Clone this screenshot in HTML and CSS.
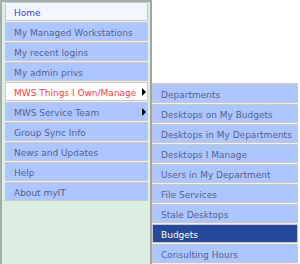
FILE: index.html
```html
<!DOCTYPE html>
<html>
<head>
<meta charset="utf-8">
<link rel="stylesheet" href="styles.css">
</head>
<body>
<div class="page">
  <div class="nav">
    <ul class="menu">
      <li class="item home">Home</li>
      <li class="item">My Managed Workstations</li>
      <li class="item">My recent logins</li>
      <li class="item">My admin privs</li>
      <li class="item active"><span>MWS Things I Own/Manage</span><i class="arrow"></i></li>
      <li class="item"><span>MWS Service Team</span><i class="arrow"></i></li>
      <li class="item">Group Sync Info</li>
      <li class="item">News and Updates</li>
      <li class="item">Help</li>
      <li class="item">About myIT</li>
    </ul>
  </div>
  <ul class="submenu">
    <li class="item">Departments</li>
    <li class="item">Desktops on My Budgets</li>
    <li class="item">Desktops in My Departments</li>
    <li class="item">Desktops I Manage</li>
    <li class="item">Users in My Department</li>
    <li class="item">File Services</li>
    <li class="item">Stale Desktops</li>
    <li class="item selected">Budgets</li>
    <li class="item">Consulting Hours</li>
  </ul>
</div>
</body>
</html>
```
FILE: styles.css
```css
html, body {
  margin: 0;
  padding: 0;
  background: #ffffff;
}
body {
  font-family: "DejaVu Sans", Verdana, sans-serif;
  font-size: 9px;
}
.page {
  position: relative;
  width: 300px;
  height: 264px;
  overflow: hidden;
}
.nav {
  box-sizing: border-box;
  width: 152px;
  height: 264px;
  border-left: 2px solid #a4acac;
  border-top: 2px solid #a4acac;
  border-right: 2px solid #9ea6a6;
  background: #dbeee1;
  padding: 0 2px 0 3px;
}
ul {
  list-style: none;
  margin: 0;
  padding: 0;
}
.menu {
  background: #eef0f0;
}
.item {
  display: flex;
  align-items: center;
  box-sizing: border-box;
  height: 19px;
  margin-bottom: 1px;
  padding: 2px 0 0 8px;
  border: 1px solid #c8c6ce;
  background: #aec6ff;
  color: #56628f;
  white-space: nowrap;
}
.menu .item:last-child {
  margin-bottom: 0;
}
.item span {
  flex: 1;
}
.home {
  background: #f1f6ff;
  color: #5038dc;
}
.active {
  background: #ffffff;
  color: #f2404a;
}
.arrow {
  width: 0;
  height: 0;
  border-left: 4px solid #000;
  border-top: 4px solid transparent;
  border-bottom: 4px solid transparent;
  margin-right: 1px;
  margin-top: -2px;
}
.submenu {
  position: absolute;
  left: 152px;
  top: 83px;
  width: 146px;
  background: #eef0f0;
  border-top: 1px solid #c8c6ce;
}
.submenu .item {
  padding-left: 8px;
}
.selected {
  background: #264a99;
  color: #ffffff;
}
```
